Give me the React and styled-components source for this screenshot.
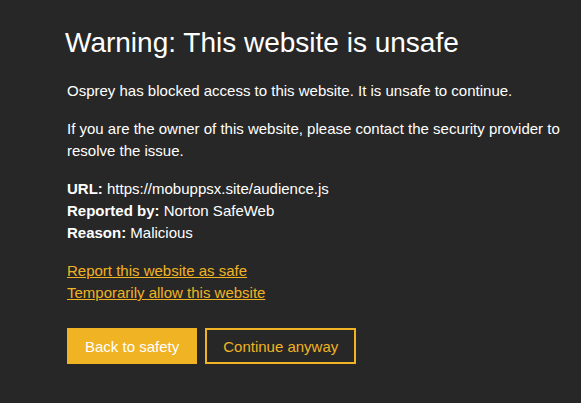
import React from "react";
import styled, { createGlobalStyle } from "styled-components";

const GlobalStyle = createGlobalStyle`
  html, body {
    margin: 0;
    background: #272727;
  }
  body {
    font-family: "Liberation Sans", Arial, sans-serif;
    color: #ffffff;
  }
`;

const Page = styled.div`
  min-height: 403px;
  background: #272727;
  padding: 27px 0 0 67px;
  box-sizing: border-box;
`;

const Content = styled.div`
  width: 500px;
`;

const Title = styled.h1`
  font-size: 28px;
  font-weight: 400;
  line-height: 32px;
  margin: 0 0 0 -2px;
`;

const Paragraph = styled.p`
  font-size: 15px;
  line-height: 22px;
  margin: ${(p) => p.$top || 16}px 0 0;
`;

const Details = styled.div`
  margin-top: 16px;
  font-size: 15px;
  line-height: 22px;
  b {
    font-weight: 700;
  }
`;

const Links = styled.div`
  margin-top: 16px;
  display: flex;
  flex-direction: column;
  align-items: flex-start;
`;

const Link = styled.a`
  color: #f0b323;
  font-size: 15px;
  line-height: 22px;
  text-decoration: underline;
  cursor: pointer;
`;

const Actions = styled.div`
  display: flex;
  gap: 8px;
  margin-top: 24px;
`;

const Button = styled.button`
  font-family: inherit;
  font-size: 15px;
  height: 36px;
  padding: 0 16px;
  border: 2px solid #f0b323;
  background: ${(p) => (p.$primary ? "#f0b323" : "transparent")};
  color: ${(p) => (p.$primary ? "#ffffff" : "#f0b323")};
  cursor: pointer;
`;

export default function App() {
  return (
    <>
      <GlobalStyle />
      <Page>
        <Content>
          <Title>Warning: This website is unsafe</Title>
          <Paragraph $top={21}>
            Osprey has blocked access to this website. It is unsafe to continue.
          </Paragraph>
          <Paragraph>
            If you are the owner of this website, please contact the security
            provider to resolve the issue.
          </Paragraph>
          <Details>
            <div>
              <b>URL:</b> https://mobuppsx.site/audience.js
            </div>
            <div>
              <b>Reported by:</b> Norton SafeWeb
            </div>
            <div>
              <b>Reason:</b> Malicious
            </div>
          </Details>
          <Links>
            <Link>Report this website as safe</Link>
            <Link>Temporarily allow this website</Link>
          </Links>
          <Actions>
            <Button $primary>Back to safety</Button>
            <Button>Continue anyway</Button>
          </Actions>
        </Content>
      </Page>
    </>
  );
}
